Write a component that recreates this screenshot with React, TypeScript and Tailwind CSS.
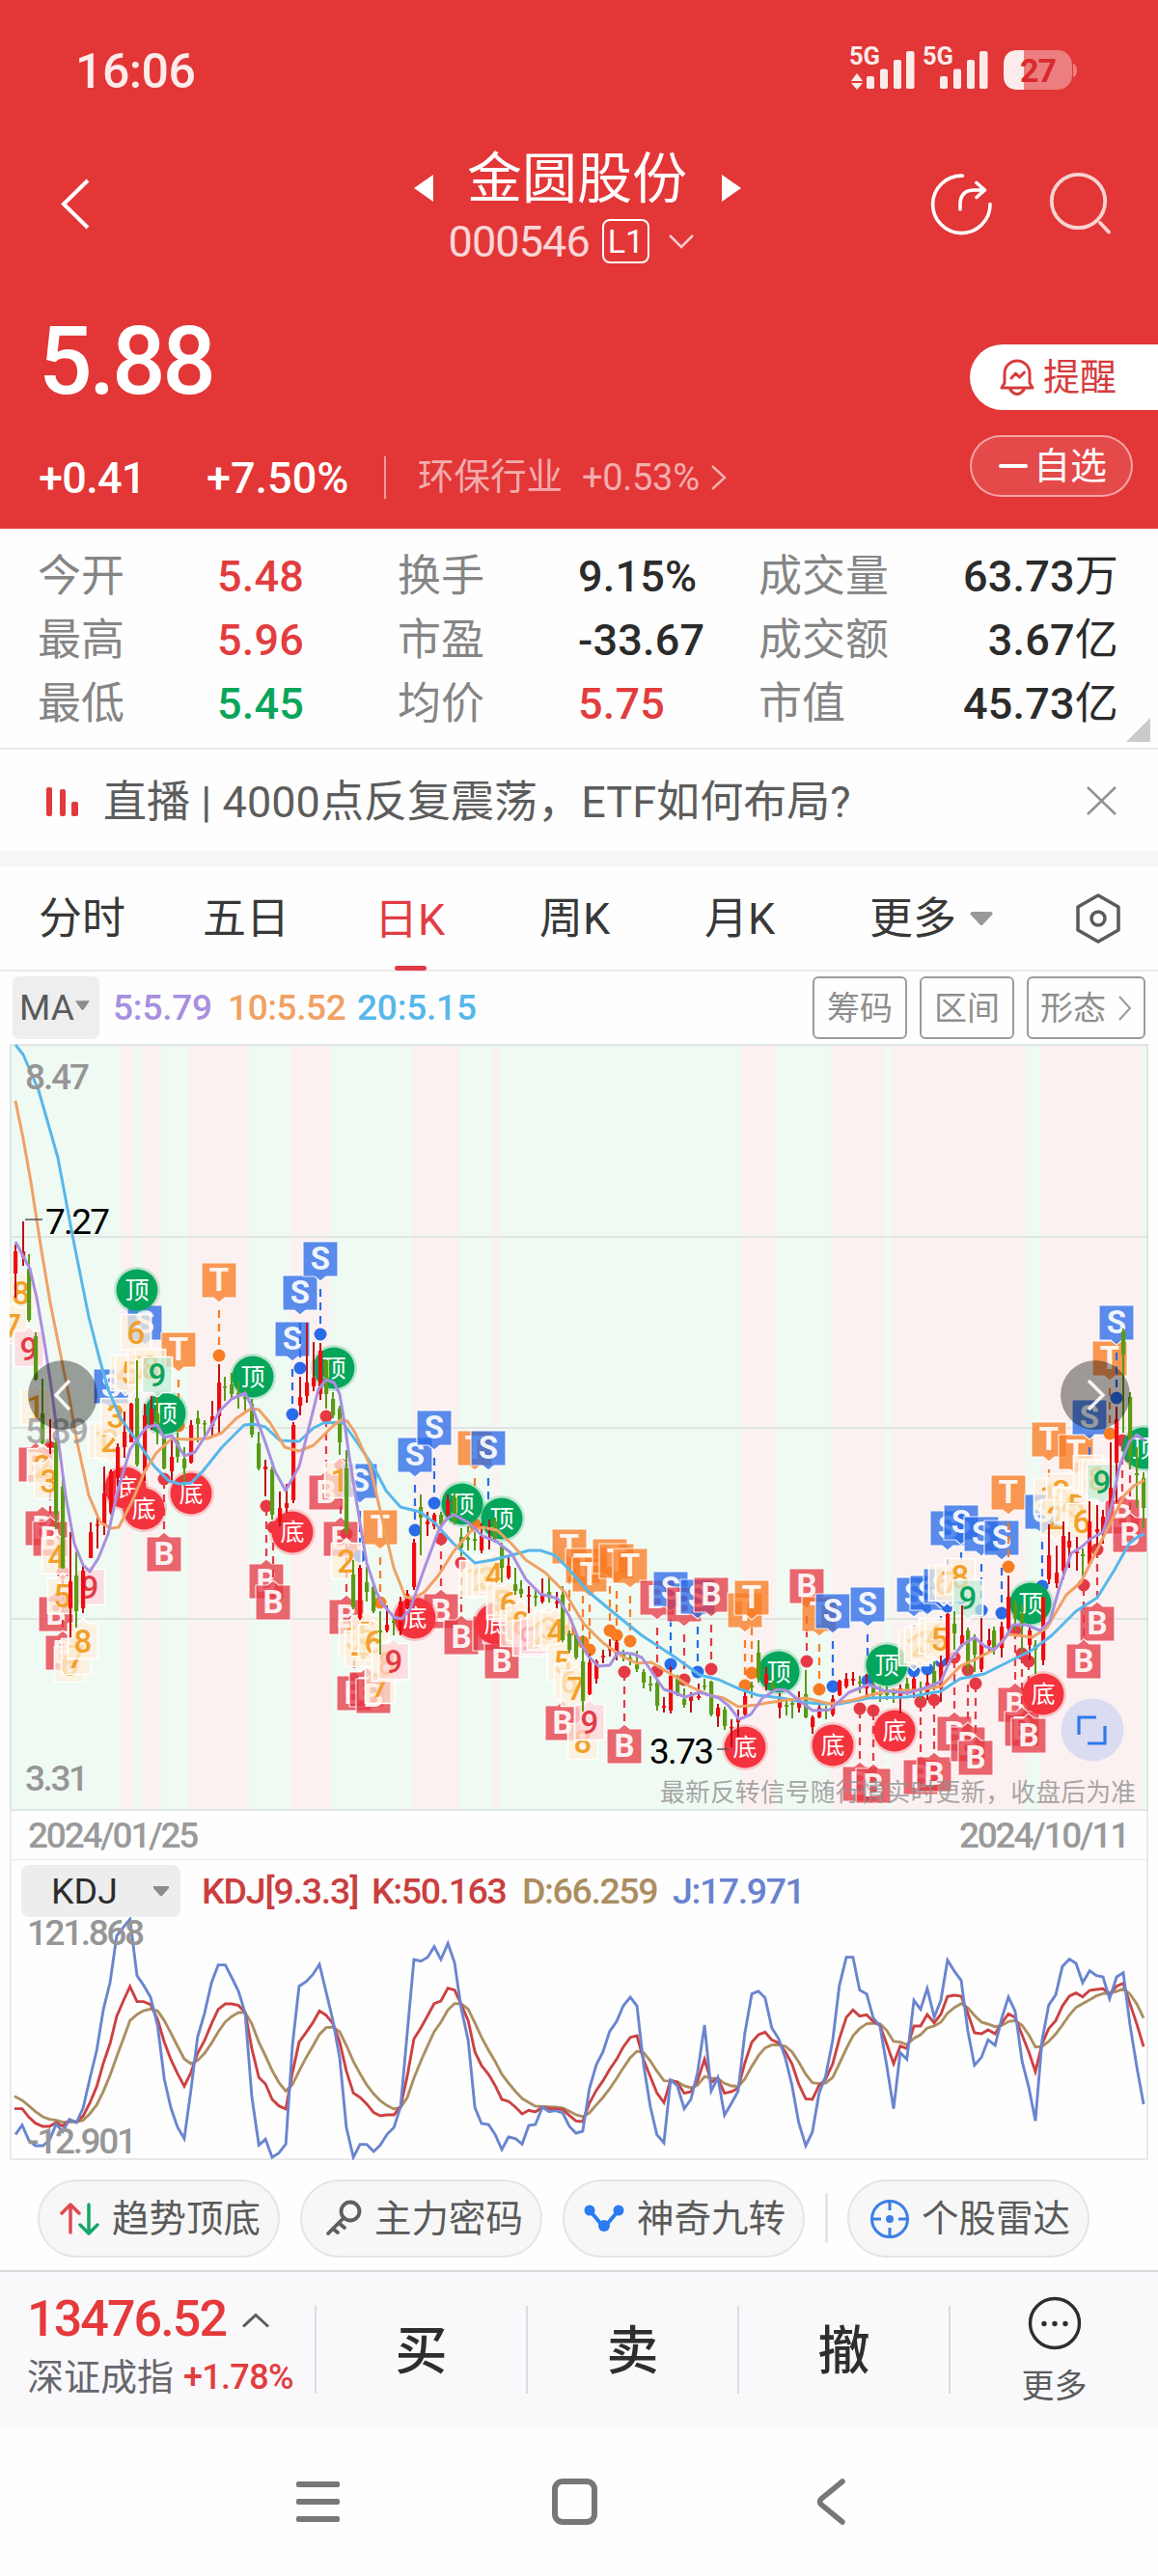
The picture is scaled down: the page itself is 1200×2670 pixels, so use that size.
import React from 'react';

type Pt = [number, number];
const parse = (s: string): Pt[] => s.trim().split(/\s+/).map((p) => p.split(',').map(Number) as Pt);
const pts = (a: Pt[]) => a.map((p) => p.join(',')).join(' ');

/* ---------- moving averages ---------- */
const MA20 = '16,1083 24,1093 40,1130 60,1200 75,1280 92,1365 103,1408 112,1440 125,1470 145,1498 160,1520 175,1535 186,1538 198,1537 210,1525 230,1500 253,1477 262,1476 275,1479 290,1493 310,1494 325,1480 335,1475 355,1474 370,1495 388,1522 400,1545 415,1562 435,1567 450,1578 470,1600 492,1620 510,1617 530,1612 548,1607 560,1607 575,1612 590,1627 610,1650 640,1675 665,1695 700,1718 725,1736 745,1741 765,1750 785,1757 810,1760 830,1764 850,1766 870,1766 900,1760 940,1759 975,1753 995,1740 1020,1735 1040,1725 1070,1710 1090,1695 1115,1670 1137,1656 1155,1627 1170,1600 1179,1593 1186,1590';
const MA10 = '16,1141 24,1180 32,1225 42,1290 52,1350 62,1400 72,1450 80,1495 92,1550 104,1578 115,1584 123,1583 137,1556 150,1525 162,1506 178,1491 195,1492 215,1491 230,1485 245,1470 260,1460 268,1461 280,1475 295,1500 310,1504 325,1498 345,1478 353,1472 360,1473 368,1485 383,1518 395,1570 408,1625 420,1655 428,1657 440,1650 455,1632 470,1608 488,1587 500,1583 515,1586 530,1600 545,1617 565,1630 585,1650 605,1683 625,1703 645,1717 660,1724 675,1723 700,1738 715,1748 735,1757 750,1760 765,1769 785,1767 795,1765 815,1762 835,1760 860,1766 885,1762 905,1756 925,1752 950,1752 975,1748 995,1727 1010,1720 1030,1710 1045,1694 1070,1697 1085,1687 1105,1653 1120,1640 1140,1600 1155,1570 1165,1550 1175,1540 1186,1534';
const MA5 = '16,1287 23,1300 31,1315 38,1345 45,1385 52,1430 60,1490 68,1550 77,1600 86,1622 93,1629 102,1615 112,1590 122,1545 135,1502 145,1488 152,1479 163,1477 170,1490 178,1488 191,1509 202,1505 215,1485 228,1462 240,1450 254,1444 262,1460 275,1495 285,1525 296,1545 310,1520 320,1480 330,1440 338,1430 346,1433 352,1445 357,1475 362,1510 370,1560 380,1620 390,1650 396,1662 408,1676 416,1678 425,1668 440,1625 455,1585 463,1574 471,1570 485,1578 500,1592 515,1598 530,1610 545,1637 560,1652 578,1657 590,1675 600,1700 610,1717 620,1727 632,1726 640,1713 655,1714 665,1718 675,1732 688,1751 698,1754 710,1759 725,1754 745,1760 755,1768 766,1782 778,1777 790,1760 805,1751 815,1752 825,1760 842,1773 860,1772 880,1754 900,1746 915,1752 940,1755 960,1749 975,1743 985,1720 997,1705 1010,1697 1020,1706 1030,1710 1040,1700 1050,1684 1063,1684 1078,1690 1088,1680 1098,1645 1110,1610 1120,1604 1130,1595 1143,1588 1152,1560 1160,1520 1170,1495 1178,1487 1186,1493';

/* ---------- candles: x, high, low, body top, body bottom, up(r)/down(g) ---------- */
const CANDLES = `16,1290,1345,1297,1320,r 24,1266,1312,1297,1303,r 30,1300,1370,1315,1368,g 37,1381,1431,1385,1430,g 44,1429,1497,1465,1496,g 52,1471,1507,1497,1499,r 58,1490,1585,1495,1570,g 65,1533,1626,1541,1625,g 73,1588,1697,1639,1667,r 79,1608,1687,1633,1670,g 86,1622,1672,1628,1667,r 94,1578,1615,1588,1615,r 101,1573,1605,1580,1581,r 108,1520,1591,1548,1580,r 115,1523,1570,1525,1568,r 122,1496,1541,1500,1531,r 129,1463,1511,1484,1500,r 136,1454,1495,1455,1495,r 142,1410,1520,1449,1518,g 150,1455,1535,1467,1525,r 157,1447,1482,1460,1480,r 163,1448,1497,1465,1478,g 170,1487,1523,1490,1522,g 178,1493,1535,1510,1525,r 184,1485,1516,1495,1510,g 191,1500,1540,1512,1522,g 198,1472,1517,1477,1516,r 205,1462,1495,1470,1476,g 212,1472,1492,1475,1476,g 220,1452,1490,1468,1478,r 227,1414,1487,1433,1468,r 233,1427,1452,1437,1438,g 240,1423,1450,1435,1445,g 247,1432,1460,1444,1446,g 254,1440,1462,1448,1450,g 261,1450,1490,1455,1487,g 268,1484,1524,1496,1522,g 275,1513,1551,1520,1523,r 282,1520,1575,1523,1570,g 290,1546,1582,1563,1577,r 297,1538,1568,1558,1563,r 304,1474,1558,1477,1555,r 311,1427,1467,1448,1457,r 318,1371,1454,1433,1447,r 325,1391,1442,1428,1437,r 332,1392,1451,1400,1445,r 338,1409,1460,1410,1445,g 345,1443,1470,1450,1467,g 352,1457,1508,1460,1495,g 359,1503,1590,1522,1586,g 366,1617,1668,1632,1666,g 373,1622,1679,1625,1677,r 380,1624,1660,1640,1650,g 387,1643,1672,1645,1670,g 394,1670,1715,1690,1692,g 401,1664,1692,1684,1690,r 408,1677,1695,1680,1682,g 415,1655,1695,1660,1690,r 422,1648,1668,1652,1667,r 429,1595,1648,1599,1645,r 436,1549,1612,1562,1573,g 443,1567,1592,1577,1580,r 450,1568,1585,1570,1582,r 457,1567,1582,1570,1580,g 464,1549,1573,1555,1570,r 471,1546,1580,1552,1578,g 478,1584,1613,1593,1604,g 485,1582,1607,1594,1596,g 492,1588,1607,1595,1597,g 499,1579,1610,1592,1607,r 507,1575,1606,1593,1595,r 513,1573,1599,1577,1595,g 520,1599,1640,1603,1625,g 527,1614,1637,1623,1635,r 534,1625,1653,1642,1649,g 540,1638,1656,1647,1652,g 548,1644,1672,1653,1655,r 555,1647,1665,1654,1656,g 562,1636,1662,1652,1660,r 569,1633,1661,1650,1655,g 577,1650,1667,1660,1662,r 583,1644,1702,1653,1700,g 590,1690,1713,1693,1710,g 597,1692,1720,1694,1718,g 604,1695,1774,1722,1763,g 611,1714,1757,1723,1756,r 618,1720,1745,1722,1740,r 625,1710,1724,1716,1718,r 632,1699,1717,1709,1710,r 639,1700,1721,1702,1715,r 646,1710,1722,1715,1718,g 653,1713,1726,1718,1719,g 660,1711,1733,1725,1730,g 667,1730,1750,1733,1744,g 674,1737,1753,1745,1747,g 681,1742,1773,1744,1768,g 688,1759,1775,1768,1770,r 695,1727,1776,1737,1773,r 702,1736,1758,1739,1757,g 709,1750,1770,1761,1767,g 716,1754,1775,1758,1763,r 724,1745,1762,1758,1760,r 730,1740,1752,1747,1748,g 737,1742,1779,1743,1777,g 744,1766,1790,1770,1779,r 751,1769,1793,1772,1789,g 758,1782,1811,1790,1791,r 765,1772,1800,1780,1785,r 772,1753,1778,1758,1777,r 779,1743,1760,1747,1749,g 786,1700,1744,1713,1740,g 794,1728,1752,1735,1745,r 801,1742,1752,1745,1750,g 808,1755,1781,1760,1770,r 815,1760,1778,1767,1769,g 821,1760,1781,1765,1767,g 828,1753,1775,1765,1770,r 835,1731,1781,1756,1780,g 842,1778,1797,1780,1790,r 849,1763,1781,1770,1780,r 856,1768,1782,1772,1774,g 863,1757,1779,1761,1777,r 870,1741,1758,1742,1757,r 877,1734,1750,1740,1748,r 884,1733,1747,1740,1742,r 891,1737,1755,1743,1745,g 898,1735,1757,1748,1750,r 905,1743,1760,1746,1755,g 912,1748,1764,1755,1757,g 919,1748,1762,1752,1757,g 926,1750,1765,1754,1756,g 933,1746,1776,1750,1758,r 940,1739,1757,1745,1752,g 947,1738,1760,1740,1754,r 954,1743,1762,1750,1753,g 961,1735,1762,1744,1755,r 968,1722,1752,1732,1750,g 975,1716,1764,1724,1750,r 982,1672,1727,1673,1726,r 989,1670,1710,1683,1693,g 997,1664,1707,1695,1705,r 1003,1687,1735,1690,1727,g 1010,1694,1733,1700,1715,g 1017,1677,1733,1703,1730,r 1025,1688,1712,1700,1705,r 1030,1686,1715,1690,1710,g 1038,1681,1718,1686,1708,r 1045,1633,1692,1655,1688,r 1052,1658,1690,1663,1677,g 1059,1663,1713,1672,1686,g 1067,1687,1720,1690,1705,r 1073,1700,1735,1705,1710,g 1081,1655,1726,1656,1721,r 1087,1580,1642,1612,1637,r 1095,1602,1646,1630,1641,r 1102,1577,1637,1592,1628,r 1108,1588,1625,1597,1604,r 1116,1593,1628,1608,1610,r 1122,1605,1634,1611,1613,g 1129,1556,1622,1577,1621,r 1137,1560,1607,1585,1588,r 1143,1565,1600,1572,1590,r 1151,1495,1565,1542,1564,r 1157,1458,1557,1471,1516,r 1164,1377,1485,1380,1404,g 1171,1443,1522,1448,1510,g 1178,1500,1563,1527,1529,g 1185,1526,1584,1532,1563,g`;

/* ---------- signal flags: kind, x, y, pointer, stem end ---------- */
const FLAGS = `S,150,1371,d T,185,1399,d,1478 T,227,1327,d,1405 S,303,1388,d,1466 S,311,1340,d,1418 S,332,1305,d,1383 S,115,1437,d B,37,1518,u B,44,1584,u B,52,1595,u,1500 B,58,1673,u B,65,1713,u,1630 B,170,1611,u,1533 B,276,1639,u,1561 B,283,1661,u,1583 B,338,1547,u,1468 B,353,1595,u,1518 B,359,1676,u,1590 B,367,1755,u,1680 B,380,1751,u B,387,1758,u S,373,1535,d,1613 T,394,1583,d,1661 S,430,1508,d,1586 S,450,1480,d,1558 B,457,1670,u,1595 B,478,1697,u,1620 T,492,1501,d,1580 S,506,1501,d,1580 B,508,1693,u B,520,1722,u B,583,1786,u T,590,1603,d,1690 T,604,1623,d,1702 T,611,1632,d,1710 T,632,1613,d,1690 T,639,1618,d,1695 T,653,1623,d,1701 B,647,1810,u,1733 B,681,1656,d,1732 S,695,1647,d,1725 B,709,1663,d,1741 S,723,1655,d,1733 B,737,1653,d,1730 T,772,1669,d,1747 T,779,1656,d,1734 B,836,1644,d,1722 T,849,1673,d,1751 S,863,1670,d,1748 S,899,1663,d,1742 B,891,1849,u,1771 B,905,1851,u,1773 B,954,1842,u,1764 B,968,1839,u,1762 B,989,1797,u,1718 B,1003,1808,u,1731 B,1011,1822,u,1745 B,1052,1767,u,1690 B,1059,1792,u,1714 B,1066,1799,u,1722 S,947,1653,d,1732 S,961,1651,d,1730 S,975,1644,d,1722 S,982,1584,d,1665 S,996,1578,d,1656 S,1017,1590,d,1669 S,1038,1594,d,1672 T,1045,1547,d,1624 S,1080,1567,d,1644 T,1087,1492,d,1560 T,1115,1505,d S,1129,1469,d,1540 T,1150,1408,d,1486 S,1157,1371,d,1449 B,1137,1683,u,1606 B,1123,1722,u,1643 B,1163,1572,u,1493 B,1171,1591,u,1510`;

/* ---------- round top / bottom badges ---------- */
const BADGES = `顶,142,1337 顶,171,1465 顶,262,1427 顶,346,1418 底,130,1542 底,149,1564 底,198,1548 底,303,1588 顶,479,1559 顶,520,1574 底,430,1677 底,514,1683 底,772,1811 顶,807,1733 顶,919,1726 底,863,1809 底,927,1794 顶,1068,1662 底,1081,1756 顶,1185,1501`;

/* ---------- sequence counters ---------- */
const SEQ = `8,22,1340,u 7,13,1374,u 9,30,1398,u,r 1,37,1458,u 2,44,1520,u 3,51,1535,u 4,59,1613,u 5,65,1654,u 6,72,1725,u 7,79,1717,u 8,86,1701,u 9,93,1645,u,r 6,141,1381,d 1,107,1493,d 2,114,1493,d 3,120,1468,d 4,130,1423,d 5,135,1423,d 7,148,1417,d 8,156,1417,d 9,163,1425,d,g 1,352,1534,u 2,359,1618,u 3,367,1698,u 4,373,1709,u 5,380,1693,u 6,387,1702,u 7,394,1747,u 8,401,1724,u 9,408,1722,u,r 1,492,1636,u 2,499,1637,u 3,505,1636,u 4,512,1632,u 5,520,1660,u 6,527,1662,u 7,534,1688,u 8,540,1682,u 9,547,1698,u,r 1,555,1696,u,r 2,562,1692,u 3,569,1688,u 4,576,1690,u 5,583,1723,u 6,590,1743,u 7,597,1750,u 8,604,1805,u 9,611,1785,u,r 1,947,1708,d 2,953,1705,d 3,960,1702,d 4,968,1696,d 5,974,1699,d 6,978,1641,d 7,985,1641,d 8,995,1634,d 9,1003,1656,d,g 1,1087,1551,d 3,1100,1546,d 2,1094,1573,d 4,1108,1560,d 5,1115,1561,d 6,1121,1577,d 7,1128,1527,d 7,1134,1531,d 8,1137,1533,d 9,1142,1536,d,g`;

const PINK = [[126, 14], [147, 20], [195, 63], [301, 41], [427, 48], [511, 6], [769, 35], [861, 55], [924, 139], [1078, 105]];

const FLAG_FILL: Record<string, string> = { S: '#2a6be8', T: '#f97c22', B: '#e53945' };

function Flag({ d }: { d: string }) {
  const [k, xs, ys, dir, end] = d.split(',');
  const x = +xs, y = +ys, w = 18;
  const path = dir === 'd'
    ? `M${x - w} ${y - w}H${x + w}V${y + w}H${x + 6}L${x} ${y + w + 5}L${x - 6} ${y + w}H${x - w}Z`
    : `M${x - w} ${y + w}H${x + w}V${y - w}H${x + 6}L${x} ${y - w - 5}L${x - 6} ${y - w}H${x - w}Z`;
  return (
    <g>
      {end && <line x1={x} x2={x} y1={dir === 'd' ? y + 31 : y - 26} y2={+end} stroke={FLAG_FILL[k]} strokeWidth="2.2" strokeDasharray="8 6" />}
      {end && <circle cx={x} cy={+end} r="6.5" fill={FLAG_FILL[k]} />}
      <path d={path} fill={FLAG_FILL[k]} fillOpacity=".77" stroke="#fff" strokeOpacity=".85" strokeWidth="1.2" strokeLinejoin="round" />
      <text x={x} y={y + 11} textAnchor="middle" fontFamily="Roboto" fontSize="33" fontWeight="700" fill="#fff" fillOpacity=".92">{k}</text>
    </g>
  );
}

function Seq({ d }: { d: string }) {
  const [n, xs, ys, dir, c] = d.split(',');
  const x = +xs, y = +ys, w = 15.5, h = 18.5;
  const bg = c === 'r' ? '#ffd3d8' : c === 'g' ? '#c4ebd8' : '#fdf0dc';
  const fg = c === 'r' ? '#e23a48' : c === 'g' ? '#0fa35c' : '#f2a02a';
  const path = dir === 'd'
    ? `M${x - w} ${y - h}H${x + w}V${y + h}H${x + 5}L${x} ${y + h + 5}L${x - 5} ${y + h}H${x - w}Z`
    : `M${x - w} ${y + h}H${x + w}V${y - h}H${x + 5}L${x} ${y - h - 5}L${x - 5} ${y - h}H${x - w}Z`;
  return (
    <g>
      <path d={path} fill={bg} fillOpacity=".72" stroke="#fff" strokeWidth="1.7" strokeLinejoin="round" />
      <text x={x} y={y + 12} textAnchor="middle" fontFamily="Roboto" fontSize="33" fontWeight="500" fill={fg}>{n}</text>
    </g>
  );
}

function Badge({ d }: { d: string }) {
  const [t, x, y] = d.split(',');
  const fill = t === '顶' ? '#05a65b' : '#f4333f';
  return (
    <g>
      <circle cx={x} cy={y} r="24" fill={fill} fillOpacity=".22" />
      <circle cx={x} cy={y} r="21.5" fill={fill} />
      <text x={x} y={+y + 9} textAnchor="middle" fontFamily="'Noto Sans CJK SC'" fontSize="25" fill="#fff">{t}</text>
    </g>
  );
}

function MainChart() {
  return (
    <svg className="block h-[798px] w-[1200px]" viewBox="0 1080 1200 798">
      <defs>
        <clipPath id="plot"><rect x="10" y="1082" width="1180" height="796" /></clipPath>
      </defs>
      <rect x="10" y="1082" width="1180" height="794" fill="#effaf3" />
      {PINK.map(([x, w]) => <rect key={x} x={x} y="1082" width={w} height="794" fill="#fbf1f0" />)}
      <g stroke="#dfe5e1" strokeWidth="2">
        {[1083, 1282, 1480, 1678, 1876].map((y) => <line key={y} x1="10" x2="1190" y1={y} y2={y} />)}
        <line x1="11" x2="11" y1="1082" y2="1878" />
        <line x1="1189" x2="1189" y1="1082" y2="1878" />
      </g>
      <g clipPath="url(#plot)">
        {FLAGS.split(' ').map((f) => <Flag key={f} d={f} />)}
        {BADGES.split(' ').map((b) => <Badge key={b} d={b} />)}
        {SEQ.split(' ').map((s) => <Seq key={s} d={s} />)}
        {CANDLES.split(' ').map((c) => {
          const [x, hi, lo, bt, bb, k] = c.split(',');
          const col = k === 'r' ? '#ee0c10' : '#5b9a16';
          return (
            <g key={x} fill={col}>
              <rect x={+x - 1} y={hi} width="2" height={+lo - +hi} fill={k === 'r' ? '#c01014' : col} />
              <rect x={+x - 2} y={bt} width="4.2" height={Math.max(1.5, +bb - +bt)} />
            </g>
          );
        })}
        <g fill="none" strokeWidth="3" strokeLinejoin="round">
          <polyline points={MA20} stroke="#57b7ea" />
          <polyline points={MA10} stroke="#f0a164" />
          <polyline points={MA5} stroke="#a88fe0" />
        </g>
      </g>
      <g fontFamily="Roboto" fontSize="37" fill="#969696" fontWeight="500">
        <text x="26" y="1129" textLength="67">8.47</text>
        <text x="26" y="1496" textLength="66" fillOpacity=".75">5.89</text>
        <text x="26" y="1856" textLength="66">3.31</text>
      </g>
      <g fontFamily="Roboto" fontSize="37" fill="#000">
        <text x="47" y="1279" textLength="67">7.27</text>
        <text x="673" y="1828" textLength="67">3.73</text>
      </g>
      <path d="M26 1264H44M743 1813H755" stroke="#555" strokeWidth="1.6" />
      <circle cx="65" cy="1446" r="36" fill="#000" fillOpacity=".37" />
      <path d="M72 1431L58 1446L72 1461" fill="none" stroke="#fff" strokeOpacity=".9" strokeWidth="3.6" />
      <circle cx="1135" cy="1446" r="36" fill="#000" fillOpacity=".37" />
      <path d="M1128 1431L1143 1446L1128 1461" fill="none" stroke="#fff" strokeOpacity=".9" strokeWidth="3.6" />
      <circle cx="1132" cy="1793" r="32.5" fill="#dadcf1" />
      <path d="M1118 1798V1780H1136M1145 1789V1807H1127" fill="none" stroke="#2f79f0" strokeWidth="3.2" />
      <text x="684" y="1867" fontFamily="'Noto Sans CJK SC'" fontSize="25.9" fill="#8f8f8f" fillOpacity=".78" textLength="493">最新反转信号随行情实时更新，收盘后为准</text>
    </svg>
  );
}

/* ---------- KDJ series, two windows joined end to end ---------- */
const join = (a: string, b: string) => pts([...parse(a), ...parse(b).map(([x, y]) => [x + 1568, y] as Pt)]);
const J = join(
  '42,937 60,908 78,955 96,972 116,972 134,955 152,905 170,928 188,890 207,900 225,855 243,765 262,675 280,548 298,465 316,320 334,293 352,268 371,443 389,473 408,511 427,600 445,765 463,855 481,915 499,950 517,800 535,635 554,560 573,464 591,410 610,410 628,450 646,492 664,560 682,820 701,970 719,952 737,1008 755,995 774,967 792,660 810,476 829,462 847,440 865,408 883,493 902,585 920,700 938,915 957,1008 975,968 993,968 1012,990 1030,970 1048,937 1067,915 1085,850 1103,620 1121,393 1140,398 1158,386 1176,353 1194,393 1213,343 1231,403 1249,545 1268,645 1286,853 1304,903 1323,906 1341,937 1359,984 1377,945 1396,950 1414,967 1432,909 1450,906 1469,852 1487,866 1505,863 1524,870 1542,912 1560,933',
  '10,927 28,795 47,720 65,680 83,617 102,585 120,537 139,510 157,537 175,720 193,850 211,938 230,963 248,768 266,785 285,857 303,828 321,745 340,597 358,802 376,760 394,877 413,840 431,802 449,623 468,500 486,492 504,512 522,605 541,640 559,700 577,785 595,900 614,972 632,930 650,810 668,755 687,645 705,475 724,386 742,386 760,488 779,500 797,575 815,600 833,720 852,857 870,683 888,703 907,520 925,548 943,483 962,572 980,520 998,395 1017,430 1035,458 1053,615 1071,722 1090,697 1108,643 1127,660 1145,575 1163,510 1181,553 1200,710 1218,790 1236,895 1254,645 1272,535 1291,503 1309,415 1328,392 1346,405 1364,465 1383,428 1401,443 1419,447 1437,515 1456,447 1474,434 1492,595 1511,730 1529,843',
);
const K = join(
  '39,857 60,857 78,883 96,902 116,912 134,912 152,900 170,911 188,893 207,898 225,880 243,840 262,788 280,715 298,655 316,570 334,522 352,477 371,524 389,524 408,533 427,580 445,650 463,705 481,748 499,787 517,745 535,685 554,645 573,592 591,548 610,531 628,531 646,536 664,557 682,670 701,760 719,780 737,828 755,848 774,858 792,745 810,650 829,620 847,590 865,553 883,566 902,593 920,650 938,740 957,808 975,822 993,842 1012,869 1030,879 1048,876 1067,876 1085,850 1103,755 1121,640 1140,605 1158,568 1176,530 1194,522 1213,482 1231,488 1249,533 1268,583 1286,680 1304,723 1323,750 1341,785 1359,828 1377,834 1396,852 1414,873 1432,862 1450,867 1469,852 1487,857 1505,857 1524,860 1542,878 1560,895',
  '10,897 28,840 47,800 65,770 83,735 102,703 120,665 139,635 157,630 175,705 193,757 211,808 230,838 248,768 266,775 285,809 303,804 321,770 340,703 358,775 376,762 394,809 413,804 431,793 449,715 468,650 486,627 504,619 522,643 541,652 559,680 577,718 595,780 614,826 632,828 650,785 668,765 687,718 705,640 724,573 742,550 760,569 779,565 797,586 815,598 833,655 852,717 870,662 888,670 907,600 925,600 943,564 962,590 980,563 998,508 1017,504 1035,507 1053,560 1071,621 1090,624 1108,612 1127,624 1145,590 1163,562 1181,573 1200,628 1218,680 1236,742 1254,655 1272,608 1291,583 1309,538 1328,507 1346,497 1364,509 1383,489 1401,486 1419,484 1437,500 1456,476 1474,467 1492,530 1511,595 1529,664',
);
const D = join(
  '39,818 60,831 78,848 96,866 116,882 134,890 152,893 170,899 188,898 207,898 225,893 243,873 262,845 280,803 298,753 316,695 334,640 352,583 371,564 389,552 408,547 427,553 445,583 463,622 481,663 499,702 517,717 535,707 554,685 573,653 591,618 610,587 628,570 646,558 664,558 682,593 701,650 719,693 737,738 755,775 774,802 792,782 810,740 829,698 847,663 865,626 883,605 902,603 920,618 938,660 957,710 975,748 993,783 1012,811 1030,832 1048,847 1067,858 1085,853 1103,822 1121,762 1140,708 1158,662 1176,617 1194,588 1213,550 1231,530 1249,531 1268,547 1286,590 1304,635 1323,675 1341,710 1359,750 1377,777 1396,803 1414,825 1432,838 1450,849 1469,850 1487,851 1505,852 1524,855 1542,865 1560,876',
  '10,882 28,870 47,845 65,822 83,795 102,763 120,730 139,698 157,678 175,683 193,708 211,740 230,770 248,771 266,773 285,786 303,792 321,784 340,757 358,762 376,763 394,778 413,786 431,788 449,765 468,725 486,692 504,668 522,659 541,658 559,663 577,680 595,712 614,750 632,776 650,779 668,777 687,760 705,717 724,670 742,630 760,608 779,593 797,591 815,593 833,613 852,648 870,650 888,658 907,638 925,627 943,606 962,600 980,588 998,560 1017,542 1035,530 1053,543 1071,567 1090,588 1108,594 1127,602 1145,598 1163,586 1181,583 1200,598 1218,627 1236,665 1254,663 1272,648 1291,625 1309,597 1328,566 1346,542 1364,530 1383,518 1401,506 1419,499 1437,498 1456,492 1474,484 1492,500 1511,532 1529,575',
);

function KdjChart() {
  return (
    <svg className="absolute inset-0 h-full w-full" viewBox="0 1927 1200 312">
      <path d="M11 1878V2238H1189V1878M11 1927H1189" fill="none" stroke="#e9e9e9" strokeWidth="2" />
      <g transform="translate(0 1900) scale(.38265 .33333)" fill="none" strokeLinejoin="miter">
        <polyline vectorEffect="non-scaling-stroke" points={D} stroke="#ab8f62" strokeWidth="2.9" />
        <polyline vectorEffect="non-scaling-stroke" points={K} stroke="#cc4142" strokeWidth="2.9" />
        <polyline vectorEffect="non-scaling-stroke" points={J} stroke="#6a85cf" strokeWidth="2.9" />
      </g>
      <g fontFamily="Roboto" fontSize="37" fill="#969696" fontWeight="500">
        <text x="28" y="2016" textLength="122">121.868</text>
        <text x="28" y="2232" textLength="114">-12.901</text>
      </g>
    </svg>
  );
}

function Header() {
  return (
    <header className="h-[548px] bg-[#e33637] text-white">
      <div className="flex h-[112px] items-end justify-between pl-[78px] pr-[84px] opacity-90">
        <span className="mb-[12px] text-[50px] font-medium leading-[52px] tracking-[-0.500px]">16:06</span>
        <svg className="mb-[18px] h-[46px] w-[238px]" viewBox="878 48 238 46" fill="#fff">
          <text x="880" y="66.500" fontFamily="Roboto" fontWeight="700" fontSize="25.500" textLength="32">5G</text>
          <text x="956" y="66.500" fontFamily="Roboto" fontWeight="700" fontSize="25.500" textLength="32">5G</text>
          {[898, 974].map((x) => (
            <g key={x}>
              <rect x={x} y="79" width="8" height="13" rx="2" />
              <rect x={x + 14} y="71.500" width="8" height="20.500" rx="2" />
              <rect x={x + 28} y="62" width="8" height="30" rx="2" />
              <rect x={x + 41} y="53" width="8.500" height="39" rx="2" />
            </g>
          ))}
          <path d="M882 84L888 76L894 84ZM882 86L888 93L894 86Z" />
          <rect x="1040" y="52" width="71" height="41" rx="15" fillOpacity=".4" />
          <path d="M1112 66q4 1 4 7t-4 7z" fillOpacity=".4" />
          <path d="M1061 52h-6q-15 0-15 15v11q0 15 15 15h6z" />
          <text x="1057" y="84.500" fontFamily="Roboto" fontWeight="700" fontSize="34" fill="#d8292b" textLength="38">27</text>
        </svg>
      </div>
      <div className="flex h-[200px] justify-between pl-[60px] pr-[46px]">
        <svg className="mt-[71px] h-[56px] w-[160px]" viewBox="0 0 160 56" fill="none" stroke="#fff" strokeWidth="4"><path d="M31 4L6 28.500L31 53" /></svg>
        <div className="ml-[15px] w-[380px]">
          <div className="mt-[39px] flex h-[68px] items-center justify-between pl-[20px] pr-[21px]">
            <svg className="mt-[19px] h-[28px] w-[20px]" viewBox="0 0 20 28" fill="#fff"><path d="M20 0V28L0 14Z" /></svg>
            <h1 className="text-[57px] font-normal leading-none">金圆股份</h1>
            <svg className="mt-[19px] h-[28px] w-[20px]" viewBox="0 0 20 28" fill="#fff"><path d="M0 0V28L20 14Z" /></svg>
          </div>
          <div className="mt-[7px] flex h-[48px] items-center pl-[56px]">
            <span className="text-[45px] leading-none tracking-[-0.900px] text-white/80">000546</span>
            <span className="ml-[13px] flex h-[46px] w-[49px] items-center justify-center rounded-[8px] border-2 border-white text-[34px] leading-none">L1</span>
            <svg className="ml-[20px] h-[16px] w-[26px]" viewBox="0 0 26 16" fill="none" stroke="#fff" strokeOpacity=".75" strokeWidth="2.500"><path d="M1 2L13 14L25 2" /></svg>
          </div>
        </div>
        <div className="mt-[66px] flex gap-[52px]">
          <svg className="h-[70px] w-[70px]" viewBox="963 178 70 70" fill="none" stroke="#fff" strokeWidth="3.600" strokeLinecap="round">
            <path d="M998.500 182.200A29.700 29.700 0 1 0 1027 211.500" /><path d="M996 217V212Q996 197 1011 197H1021M1013 189.500L1021.500 197L1013 204.500" strokeLinejoin="round" />
          </svg>
          <svg className="h-[70px] w-[70px]" viewBox="1085 178 70 70" fill="none" stroke="#fff" strokeOpacity=".78" strokeWidth="3.800" strokeLinecap="round">
            <circle cx="1118.500" cy="208.500" r="27.700" /><path d="M1141 231L1150 240.500" />
          </svg>
        </div>
      </div>
      <div className="flex h-[236px] justify-between">
        <div className="flex flex-col pl-[40px]">
          <div className="mt-[14px] text-[98px] leading-[98px] font-medium tracking-[-3.500px]">5.88</div>
          <div className="mt-[48px] flex h-[46px] items-center">
            <span className="w-[174px] text-[45px] font-medium leading-none tracking-[-0.700px]">+0.41</span>
            <span className="w-[184px] text-[45px] font-medium leading-none">+7.50%</span>
            <span className="mr-[33px] h-[44px] w-[2px] bg-white/50" />
            <span className="text-[37.500px] leading-none text-white/60">环保行业</span>
            <span className="ml-[20px] text-[38px] leading-none tracking-[-0.300px] text-white/60">+0.53%</span>
            <svg className="ml-[11px] h-[28px] w-[18px]" viewBox="0 0 18 28" fill="none" stroke="#fff" strokeOpacity=".6" strokeWidth="2.500"><path d="M2 2L15 14L2 26" /></svg>
          </div>
        </div>
        <div className="flex w-[195px] flex-col pt-[45px]">
          <div className="flex h-[68px] items-center rounded-l-full bg-white pl-[31px] text-[#d63c3d]">
            <svg className="h-[38px] w-[36px]" viewBox="0 0 36 38" fill="none" stroke="currentColor" strokeWidth="3" strokeLinejoin="round" strokeLinecap="round">
              <path d="M2 30H34L31 25V15a13 13 0 0 0-26 0V25ZM11 32q7 9 14 0" /><path d="M12 20l4.500-5 4 4 5-5" />
            </svg>
            <span className="ml-[9px] text-[38px] leading-none">提醒</span>
          </div>
          <div className="mt-[26px] flex h-[64px] w-[169px] items-center rounded-full border-2 border-white/50 bg-white/10 pl-[28px]">
            <span className="h-[4px] w-[30px] rounded-full bg-white" />
            <span className="ml-[6px] text-[38px] leading-none">自选</span>
          </div>
        </div>
      </div>
    </header>
  );
}

const STATS: [string, string, string][][] = [
  [['今开', '5.48', 'r'], ['换手', '9.15%', ''], ['成交量', '63.73万', '']],
  [['最高', '5.96', 'r'], ['市盈', '-33.67', ''], ['成交额', '3.67亿', '']],
  [['最低', '5.45', 'g'], ['均价', '5.75', 'r'], ['市值', '45.73亿', '']],
];

function Stats() {
  return (
    <section className="relative h-[229px] border-b-2 border-[#ebebeb] pl-[39px] pr-[41px] pt-[17px]">
      {STATS.map((row, i) => (
        <div key={i} className="grid h-[65.700px] grid-cols-[186px_187px_187px_187px_1fr_auto] items-center text-[45px] leading-none">
          {row.map(([l, v, c]) => (
            <React.Fragment key={l}>
              <span className="whitespace-nowrap text-[#858585]">{l}</span>
              <span className={`whitespace-nowrap font-medium tracking-[0.200px] ${c === 'r' ? 'text-[#e23d3e]' : c === 'g' ? 'text-[#0aa55b]' : 'text-[#2b2b2b]'} ${l.startsWith('成交') || l === '市值' ? 'text-right' : ''}`}>
                {v.replace(/[万亿]/, '')}
                <span className="font-normal">{v.replace(/[^万亿]/g, '')}</span>
              </span>
            </React.Fragment>
          ))}
        </div>
      ))}
      <svg className="absolute bottom-[6px] right-[8px] h-[25px] w-[25px]" viewBox="0 0 25 25"><path d="M25 0V25H0Z" fill="#cbcbcb" /></svg>
    </section>
  );
}

function Notice() {
  return (
    <section className="flex h-[105px] items-center pl-[48px] pr-[43px] text-[45px] leading-none text-[#5c5c5c]">
      <svg className="mt-[2px] h-[30px] w-[34px]" viewBox="0 0 34 30" fill="#e03a40">
        <rect width="6" height="30" rx="2" /><rect x="14" y="2" width="6" height="28" rx="2" /><rect x="26" y="15" width="7" height="15" rx="2" />
      </svg>
      <span className="ml-[25px] mt-[4px] whitespace-nowrap tracking-[0.050px]">直播 | 4000点反复震荡，ETF如何布局?</span>
      <svg className="ml-auto h-[30px] w-[31px]" viewBox="0 0 31 30" stroke="#929292" strokeWidth="2.500"><path d="M1 1L30 29M30 1L1 29" /></svg>
    </section>
  );
}

function Tabs() {
  return (
    <nav className="flex h-[109px] items-center border-b-2 border-[#ebebeb] pl-[40px] text-[45px] leading-none text-[#383838]">
      <span className="mt-[2px] w-[170px]">分时</span>
      <span className="mt-[2px] w-[178px]">五日</span>
      <span className="flex w-[171px] flex-col pt-[33px] text-[#e23b45]">日K<i className="ml-[21px] mt-[25px] h-[5px] w-[33px] rounded-full bg-[#e23b45]" /></span>
      <span className="mt-[2px] w-[171px]">周K</span>
      <span className="mt-[2px] w-[171px]">月K</span>
      <span className="mt-[2px]">更多</span>
      <svg className="ml-[14px] h-[14px] w-[24px]" viewBox="0 0 24 14"><path d="M2 0H22L24 2L13 14H11L0 2Z" fill="#999" /></svg>
      <svg className="ml-[84px] h-[54px] w-[50px]" viewBox="0 0 50 54" fill="none" stroke="#5b5b5b" strokeWidth="3.500" strokeLinejoin="round">
        <path d="M25 3L46 15V39L25 51L4 39V15Z" /><circle cx="25" cy="27" r="7" />
      </svg>
    </nav>
  );
}

function MaBar() {
  return (
    <div className="flex h-[73px] items-center pl-[13px] pr-[13px] pt-[2px] text-[37px] leading-none">
      <div className="flex h-[65px] w-[90px] items-center rounded-[7px] bg-[#eee] pl-[7px] text-[#5a5a5a]">
        MA<svg className="ml-[1px] mt-[-6px] h-[10px] w-[15px] shrink-0" viewBox="0 0 16 10"><path d="M0 0H16L9 10H7Z" fill="#8c8c8c" /></svg>
      </div>
      <span className="ml-[14px] w-[119px] font-medium tracking-[-0.200px] text-[#a88fe0]">5:5.79</span>
      <span className="w-[134px] font-medium tracking-[-0.400px] text-[#f0a164]">10:5.52</span>
      <span className="font-medium tracking-[-0.200px] text-[#57b7ea]">20:5.15</span>
      <div className="ml-auto flex gap-[13px] text-[34px] tracking-normal text-[#8e8e8e]">
        <span className="flex h-[65px] w-[98px] items-center justify-center rounded-[6px] border-2 border-[#9b9b9b]">筹码</span>
        <span className="flex h-[65px] w-[98px] items-center justify-center rounded-[6px] border-2 border-[#9b9b9b]">区间</span>
        <span className="flex h-[65px] w-[123px] items-center rounded-[6px] border-2 border-[#9b9b9b] pl-[12px]">
          形态
          <svg className="ml-[12px] h-[26px] w-[15px]" viewBox="0 0 15 26" fill="none" stroke="#999" strokeWidth="2"><path d="M2 1L13 13L2 25" /></svg>
        </span>
      </div>
    </div>
  );
}

function Kdj() {
  return (
    <section className="relative h-[312px]">
      <KdjChart />
      <div className="relative flex h-[60px] items-end pl-[22px] text-[37.500px] leading-[54px]">
        <div className="flex h-[54px] w-[165px] items-center rounded-[8px] bg-[#ededed] pl-[31px] text-[#2c2c2c]">
          KDJ<svg className="ml-auto mr-[12px] h-[10px] w-[16px]" viewBox="0 0 16 10"><path d="M0 0H16V2L9 10H7L0 2Z" fill="#8c8c8c" /></svg>
        </div>
        <span className="ml-[22px] w-[176px] whitespace-nowrap font-medium tracking-[-1.200px] text-[#c93f40]">KDJ[9.3.3]</span>
        <span className="w-[156px] font-medium tracking-[-1.400px] text-[#c93f40]">K:50.163</span>
        <span className="w-[156px] font-medium tracking-[-1.400px] text-[#ab8d5f]">D:66.259</span>
        <span className="font-medium tracking-[-1.400px] text-[#6982cf]">J:17.971</span>
      </div>
    </section>
  );
}

function Chip({ label, children }: { label: string; children: React.ReactNode }) {
  return (
    <div className="flex h-[81px] w-[251px] shrink-0 items-center rounded-full border-2 border-[#e5e5e5] bg-[#f7f7f7] pl-[20px] text-[38.500px] leading-none text-[#5a5a5a]">
      <svg className="mr-[13px] h-[44px] w-[42px] shrink-0" viewBox="0 0 42 44" fill="none">{children}</svg>
      <span className="mt-[1px] whitespace-nowrap">{label}</span>
    </div>
  );
}

function Chips() {
  return (
    <section className="flex h-[114px] pl-[39px] pt-[20px]">
      <Chip label="趋势顶底">
        <g strokeWidth="3.500" strokeLinecap="round" strokeLinejoin="round"><path d="M12 36V8M3 16L12 7L21 16" stroke="#e2484f" /><path d="M31 7V36M22 28L31 37L40 28" stroke="#16a765" /></g>
      </Chip>
      <div className="w-[21px]" />
      <Chip label="主力密码">
        <g stroke="#5f5f5f" strokeWidth="3.800" strokeLinecap="round"><circle cx="30" cy="14" r="9.500" /><path d="M23 21L7 37M18 26L24 31M12 32L17 36" /></g>
      </Chip>
      <div className="w-[21px]" />
      <Chip label="神奇九转">
        <path d="M6 13L21 31L36 13" stroke="#2b7bf3" strokeWidth="4" />
        <circle cx="6" cy="13" r="5.500" fill="#2b7bf3" /><circle cx="36" cy="13" r="5.500" fill="#2b7bf3" /><circle cx="21" cy="29" r="6" fill="#2b7bf3" />
      </Chip>
      <div className="ml-[21px] mr-[20px] mt-[14px] h-[52px] w-[3px] bg-[#e6e6e6]" />
      <Chip label="个股雷达">
        <g stroke="#3a7fe6" strokeWidth="3"><circle cx="22" cy="22" r="18.500" /><path d="M22 3V13M22 31V41M3 22H13M31 22H41" /></g>
        <circle cx="22" cy="22" r="4" fill="#3a7fe6" />
      </Chip>
    </section>
  );
}

function BottomBar() {
  return (
    <footer className="flex h-[164px] border-t-2 border-[#d8dade] bg-[#f9f9fc]">
      <div className="w-[326px] pl-[28px] pt-[23px]">
        <div className="flex h-[52px] items-center text-[#e5393a]">
          <span className="text-[52px] font-medium leading-none tracking-[-1.900px]">13476.52</span>
          <svg className="ml-[17px] h-[17px] w-[28px]" viewBox="0 0 28 16" fill="none" stroke="#5c5c5c" strokeWidth="3"><path d="M1 15L14 3L27 15" /></svg>
        </div>
        <div className="mt-[12px] flex h-[44px] items-center whitespace-nowrap">
          <span className="text-[38px] leading-none text-[#67676d]">深证成指</span>
          <span className="ml-[10px] text-[36px] font-medium leading-none tracking-[-0.700px] text-[#e23d3e]">+1.78%</span>
        </div>
      </div>
      {['买', '卖', '撤'].map((t) => (
        <div key={t} className="flex w-[219px] pt-[35px]">
          <i className="h-[91px] w-[2px] bg-[#dcdce0]" />
          <span className="flex h-[95px] flex-1 items-center justify-center text-[54px] font-medium leading-none text-[#2e2e2e]">{t}</span>
        </div>
      ))}
      <div className="flex flex-1 pt-[22px]">
        <i className="mt-[13px] h-[91px] w-[2px] bg-[#dcdce0]" />
        <div className="flex flex-1 flex-col items-center">
          <svg className="mt-[1px] h-[60px] w-[60px]" viewBox="0 0 60 60"><circle cx="30" cy="30" r="25.500" fill="none" stroke="#2e2e2e" strokeWidth="3.400" /><g fill="#2e2e2e"><circle cx="19" cy="30.500" r="2.700" /><circle cx="30" cy="30.500" r="2.700" /><circle cx="41" cy="30.500" r="2.700" /></g></svg>
          <span className="mt-[18px] text-[34px] leading-none text-[#5c5c5c]">更多</span>
        </div>
      </div>
    </footer>
  );
}

function SystemNav() {
  return (
    <div className="flex h-[153px] items-start pl-[304px] pt-[50px]">
      <svg className="h-[54px] w-[50px]" viewBox="0 0 50 54" fill="#777"><rect x="3" y="5" width="45" height="6" rx="2" /><rect x="3" y="23" width="45" height="6" rx="2" /><rect x="3" y="41" width="45" height="6" rx="2" /></svg>
      <svg className="ml-[215px] h-[54px] w-[54px]" viewBox="0 0 54 54" fill="none" stroke="#777" strokeWidth="6"><rect x="6" y="5" width="41" height="42" rx="8" /></svg>
      <svg className="ml-[219px] h-[54px] w-[40px]" viewBox="0 0 40 54" fill="none" stroke="#777" strokeWidth="5.500" strokeLinecap="round"><path d="M31 5L9 23Q6 26 9 29L31 47" /></svg>
    </div>
  );
}

export default function App() {
  return (
    <div className="flex h-[2670px] w-[1200px] flex-col overflow-hidden bg-[#fefefe] font-['Roboto','Noto_Sans_CJK_SC',sans-serif]">
      <Header />
      <Stats />
      <Notice />
      <div className="h-[16px] bg-[#f7f7f7]" />
      <Tabs />
      <MaBar />
      <MainChart />
      <div className="mx-[10px] flex h-[49px] items-center justify-between border-x-2 border-[#ececec] pl-[17px] pr-[19px] text-[37px] leading-none font-medium tracking-[-2.200px] text-[#9a9a9a]">
        <span>2024/01/25</span>
        <span>2024/10/11</span>
      </div>
      <Kdj />
      <Chips />
      <BottomBar />
      <SystemNav />
    </div>
  );
}
